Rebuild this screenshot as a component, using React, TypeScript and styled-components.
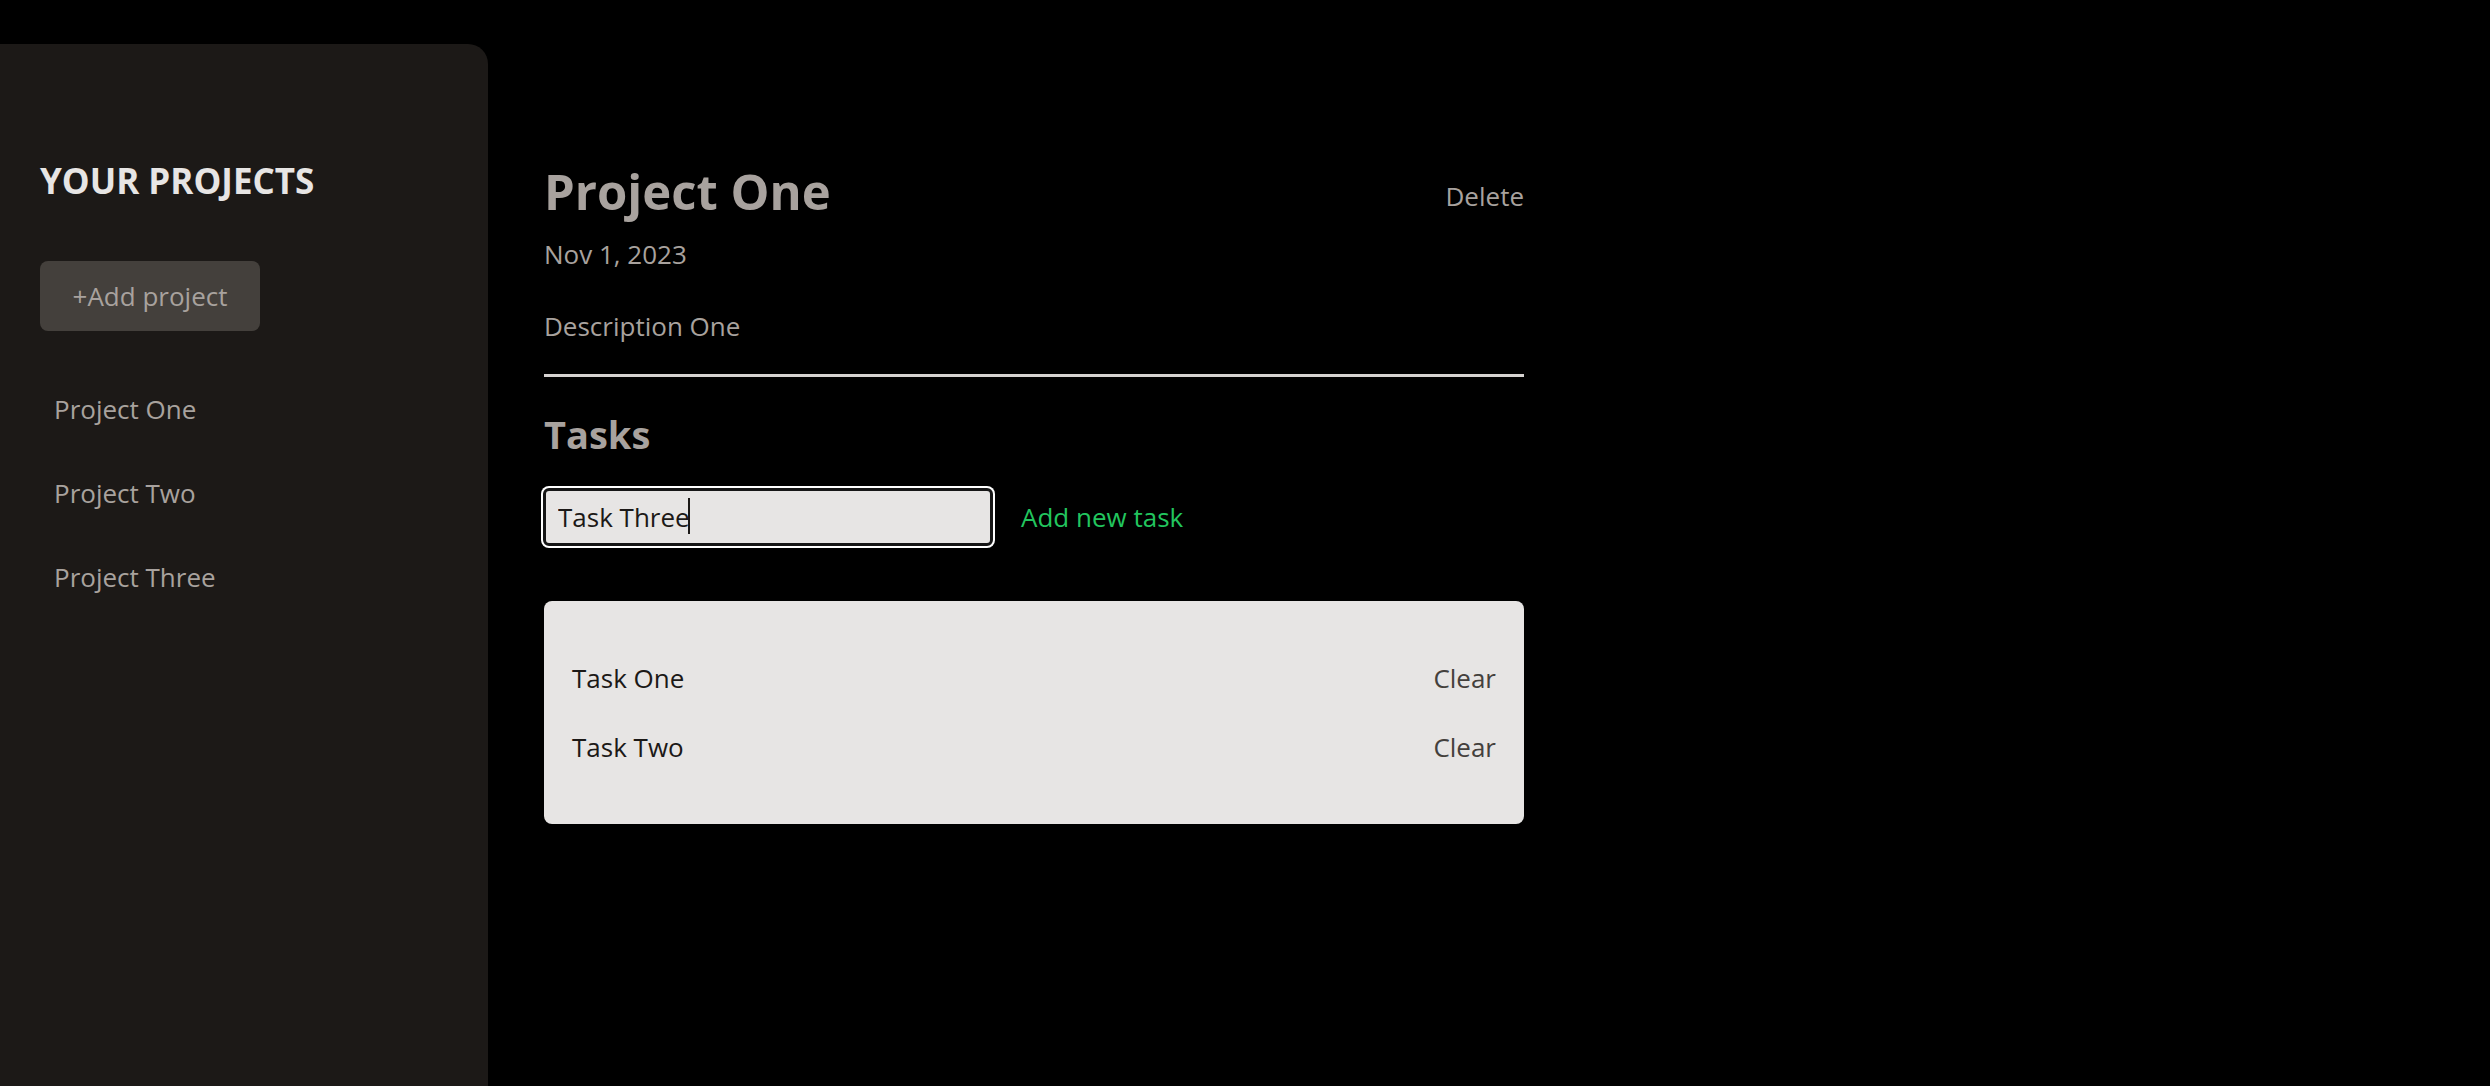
import React from "react";
import styled, { createGlobalStyle } from "styled-components";

const GlobalStyle = createGlobalStyle`
  html, body {
    margin: 0;
    padding: 0;
    background: #000;
    font-family: "Open Sans", "Noto Sans", sans-serif;
  }
  * { box-sizing: border-box; }
`;

const Page = styled.div`
  display: flex;
  align-items: flex-start;
  gap: 56px;
  padding-top: 44px;
  min-height: 100vh;
  background: #000;
`;

const Sidebar = styled.aside`
  width: 488px;
  height: calc(100vh - 44px);
  background: #1c1917;
  border-top-right-radius: 20px;
  padding: 113px 40px 0;
  display: flex;
  flex-direction: column;
  align-items: flex-start;
`;

const SideTitle = styled.h2`
  margin: 0;
  font-size: 35px;
  line-height: 48px;
  font-weight: 700;
  text-transform: uppercase;
  color: #e7e5e4;
`;

const AddProjectButton = styled.button`
  margin-top: 56px;
  width: 220px;
  height: 70px;
  border: none;
  border-radius: 8px;
  background: #44403c;
  color: #a8a29e;
  font-family: inherit;
  font-size: 26px;
  line-height: 36px;
  padding: 0;
  cursor: pointer;
`;

const ProjectList = styled.ul`
  list-style: none;
  margin: 36px 0 0;
  padding: 0;
  align-self: stretch;
`;

const ProjectItem = styled.li`
  display: block;
`;

const ProjectButton = styled.button`
  display: block;
  width: 100%;
  text-align: left;
  background: none;
  border: none;
  padding: 22px 14px;
  font-family: inherit;
  font-size: 26px;
  line-height: 40px;
  color: #a8a29e;
  cursor: pointer;
`;

const Main = styled.main`
  width: 980px;
  padding-top: 115px;
`;

const Header = styled.header`
  padding-bottom: 28px;
  border-bottom: 3px solid #d6d3d1;
  margin-bottom: 31px;
`;

const HeaderRow = styled.div`
  display: flex;
  justify-content: space-between;
  align-items: flex-start;
`;

const ProjectTitle = styled.h1`
  margin: 0;
  font-size: 49px;
  line-height: 65px;
  font-weight: 700;
  color: #a8a29e;
`;

const TextButton = styled.button<{ $tone: "muted" | "green" | "dark" }>`
  background: none;
  border: none;
  padding: 0;
  font-family: inherit;
  font-size: 26px;
  line-height: 39px;
  cursor: pointer;
  color: ${(p) =>
    p.$tone === "green" ? "#22c55e" : p.$tone === "dark" ? "#44403c" : "#a8a29e"};
`;

const DeleteButton = styled(TextButton)`
  margin-top: 18px;
`;

const DateText = styled.p`
  margin: 11px 0 0;
  font-size: 26px;
  line-height: 39px;
  color: #a8a29e;
`;

const Description = styled.p`
  margin: 33px 0 0;
  font-size: 26px;
  line-height: 39px;
  color: #a8a29e;
`;

const TasksTitle = styled.h2`
  margin: 0;
  font-size: 38px;
  line-height: 52px;
  font-weight: 700;
  color: #a8a29e;
`;

const NewTaskRow = styled.div`
  display: flex;
  align-items: center;
  gap: 28px;
  margin-top: 28px;
`;

const InputWrap = styled.div`
  position: relative;
  margin-left: -1px;
`;

const TaskInput = styled.input`
  width: 450px;
  height: 58px;
  border: 3px solid #161616;
  border-radius: 6px;
  box-shadow: 0 0 0 2px #ffffff;
  background: #e7e5e4;
  color: #1c1917;
  font-family: inherit;
  font-size: 26px;
  padding: 0 12px;
  outline: none;
`;

const Caret = styled.span`
  position: absolute;
  left: 145px;
  top: 10px;
  width: 2px;
  height: 36px;
  background: #1c1917;
  pointer-events: none;
`;

const TaskList = styled.ul`
  list-style: none;
  margin: 55px 0 0;
  padding: 58px 28px 57px;
  background: #e7e5e4;
  border-radius: 8px;
  display: flex;
  flex-direction: column;
  gap: 30px;
`;

const TaskRow = styled.li`
  display: flex;
  justify-content: space-between;
  align-items: center;
`;

const TaskName = styled.span`
  font-size: 26px;
  line-height: 39px;
  color: #1c1917;
`;

const projects = ["Project One", "Project Two", "Project Three"];
const tasks = ["Task One", "Task Two"];

export default function App() {
  return (
    <>
      <GlobalStyle />
      <Page>
        <Sidebar>
          <SideTitle>Your Projects</SideTitle>
          <AddProjectButton>+Add project</AddProjectButton>
          <ProjectList>
            {projects.map((p) => (
              <ProjectItem key={p}>
                <ProjectButton>{p}</ProjectButton>
              </ProjectItem>
            ))}
          </ProjectList>
        </Sidebar>
        <Main>
          <Header>
            <HeaderRow>
              <ProjectTitle>Project One</ProjectTitle>
              <DeleteButton $tone="muted">Delete</DeleteButton>
            </HeaderRow>
            <DateText>Nov 1, 2023</DateText>
            <Description>Description One</Description>
          </Header>
          <section>
            <TasksTitle>Tasks</TasksTitle>
            <NewTaskRow>
              <InputWrap>
                <TaskInput type="text" defaultValue="Task Three" />
                <Caret />
              </InputWrap>
              <TextButton $tone="green">Add new task</TextButton>
            </NewTaskRow>
            <TaskList>
              {tasks.map((t) => (
                <TaskRow key={t}>
                  <TaskName>{t}</TaskName>
                  <TextButton $tone="dark">Clear</TextButton>
                </TaskRow>
              ))}
            </TaskList>
          </section>
        </Main>
      </Page>
    </>
  );
}
